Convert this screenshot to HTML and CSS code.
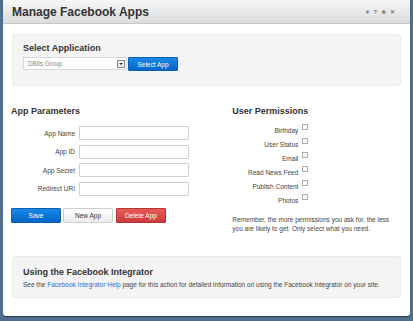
FILE: index.html
```html
<!DOCTYPE html>
<html lang="en">
<head>
  <meta charset="UTF-8">
  <title>Manage Facebook Apps</title>
  <link rel="stylesheet" href="styles.css">
</head>
<body>

  <div class="dialog">
    <div class="dialog-head">
      <h1>Manage Facebook Apps</h1>
      <div class="head-tools">
        <span class="tool">&#9662;</span>
        <span class="tool">?</span>
        <span class="tool">&#9733;</span>
        <span class="tool">&#10005;</span>
      </div>
    </div>

    <div class="dialog-body">
      <!-- choose an app -->
      <div class="panel select-panel">
        <h2>Select Application</h2>
        <div class="select-row">
          <div class="select-box">
            <span>DBits Group</span>
            <span class="select-arrow"><i></i></span>
          </div>
          <button class="btn btn-blue btn-select">Select App</button>
        </div>
      </div>

      <div class="columns">
        <!-- app parameters -->
        <div class="col-params">
          <h3>App Parameters</h3>
          <div class="form-row"><label>App Name</label><input type="text"></div>
          <div class="form-row"><label>App ID</label><input type="text"></div>
          <div class="form-row"><label>App Secret</label><input type="text"></div>
          <div class="form-row"><label>Redirect URI</label><input type="text"></div>

          <div class="buttons">
            <button class="btn btn-blue">Save</button>
            <button class="btn btn-white">New App</button>
            <button class="btn btn-red">Delete App</button>
          </div>
        </div>

        <!-- permissions -->
        <div class="col-perms">
          <h3>User Permissions</h3>
          <div class="perm"><span>Birthday</span><i class="check"></i></div>
          <div class="perm"><span>User Status</span><i class="check"></i></div>
          <div class="perm"><span>Email</span><i class="check"></i></div>
          <div class="perm"><span>Read News Feed</span><i class="check"></i></div>
          <div class="perm"><span>Publish Content</span><i class="check"></i></div>
          <div class="perm"><span>Photos</span><i class="check"></i></div>
          <p class="note">Remember, the more permissions you ask for, the less you are likely to get. Only select what you need.</p>
        </div>
      </div>

      <div class="panel help-panel">
        <h2>Using the Facebook Integrator</h2>
        <p>See the <a href="#">Facebook Integrator Help</a> page for this action for detailed information on using the Facebook Integrator on your site.</p>
      </div>
    </div>
  </div>

</body>
</html>
```

FILE: styles.css
```css
body {
  margin: 0;
  background: #4f6f91;
  font-family: "Liberation Sans", Arial, sans-serif;
  height: 321px;
  overflow: hidden;
}

.dialog {
  margin: 0 3px;
  height: 316px;
  background: #fff;
  border-radius: 0 0 3px 3px;
  box-shadow: 0 1px 1px rgba(0,0,0,0.5);
}

.dialog-head {
  height: 24px;
  box-sizing: border-box;
  display: flex;
  align-items: center;
  justify-content: space-between;
  padding: 0 15px 0 9px;
  background: linear-gradient(#f7f7f7, #dcdcdc);
  border-bottom: 1px solid #c8c8c8;
}

.dialog-head h1 {
  margin: 0;
  font-size: 12px;
  color: #333;
  position: relative;
  top: 0.5px;
}

.head-tools {
  display: flex;
  gap: 4px;
  align-items: center;
}

.tool {
  font-size: 6px;
  color: #777;
  font-weight: bold;
}

.dialog-body {
  padding: 10px 9px 0 9px;
}

.panel {
  background: #f4f4f4;
  border: 1px solid #ebebeb;
  border-radius: 3px;
  padding: 0 10px;
}

.panel h2 {
  margin: 0;
  font-size: 9px;
  color: #333;
}

.select-panel {
  height: 52px;
  box-sizing: border-box;
  padding-top: 8px;
}

.select-row {
  display: flex;
  margin-top: 4px;
}

.select-box {
  width: 104px;
  height: 13px;
  box-sizing: border-box;
  background: #fff;
  border: 1px solid #d8d8d8;
  display: flex;
  align-items: center;
  justify-content: space-between;
  padding: 0 1px 0 4px;
  font-size: 6.3px;
  color: #888;
}

.select-arrow {
  width: 8px;
  height: 8px;
  box-sizing: border-box;
  border: 1px solid #888;
  background: #eee;
  display: flex;
  align-items: center;
  justify-content: center;
}

.select-arrow i {
  border-left: 2px solid transparent;
  border-right: 2px solid transparent;
  border-top: 2px solid #333;
}

.btn {
  font-family: "Liberation Sans", Arial, sans-serif;
  font-size: 6.5px;
  height: 15px;
  border-radius: 1px;
  padding: 0;
  cursor: pointer;
}

.btn-blue {
  background: linear-gradient(#1b88e6, #0066c9);
  border: 1px solid #0a5fb0;
  color: #fff;
}

.btn-white {
  background: linear-gradient(#fff, #ececec);
  border: 1px solid #cfcfcf;
  color: #333;
}

.btn-red {
  background: linear-gradient(#e85a5a, #cc3c3c);
  border: 1px solid #b53232;
  color: #fff;
}

.btn-select {
  width: 50px;
  height: 14px;
  margin-left: 1px;
}

.columns {
  display: flex;
  margin-top: 20px;
}

.columns h3 {
  margin: 0 0 7px 0;
  font-size: 9px;
  color: #333;
}

.col-params h3 {
  margin-bottom: 10px;
}

.col-params {
  width: 223px;
  margin-left: -1px;
}

.form-row {
  display: flex;
  align-items: center;
  height: 14px;
  margin-bottom: 4.5px;
}

.form-row label {
  width: 64px;
  text-align: right;
  font-size: 6.5px;
  color: #444;
  margin-right: 4px;
}

.form-row input {
  width: 110px;
  height: 14px;
  box-sizing: border-box;
  border: 1px solid #cfcfcf;
  border-radius: 1px;
  margin: 0;
  padding: 0;
}

.buttons {
  display: flex;
  gap: 2px;
  margin-top: 12px;
}

.buttons .btn-blue { width: 50px; }
.buttons .btn-white { width: 50px; }
.buttons .btn-red { width: 50px; margin-left: 1px; }

.col-perms {
  width: 170px;
}

.perm {
  display: flex;
  align-items: center;
  width: 76px;
  justify-content: flex-end;
  height: 14px;
  font-size: 6.5px;
  color: #444;
  white-space: nowrap;
}

.check {
  width: 6px;
  height: 6px;
  flex: none;
  box-sizing: border-box;
  border: 1px solid #aaa;
  background: #fff;
  margin-left: 4px;
  position: relative;
  top: -3px;
}

.note {
  margin: 8px 0 0 0;
  width: 165px;
  font-size: 6.5px;
  line-height: 9px;
  color: #444;
}

.help-panel {
  margin-top: 23px;
  height: 42px;
  box-sizing: border-box;
  padding-top: 10px;
}

.help-panel p {
  margin: 4px 0 0 0;
  font-size: 6.5px;
  color: #444;
}

.help-panel a {
  color: #2a6fd0;
  text-decoration: none;
}
```
